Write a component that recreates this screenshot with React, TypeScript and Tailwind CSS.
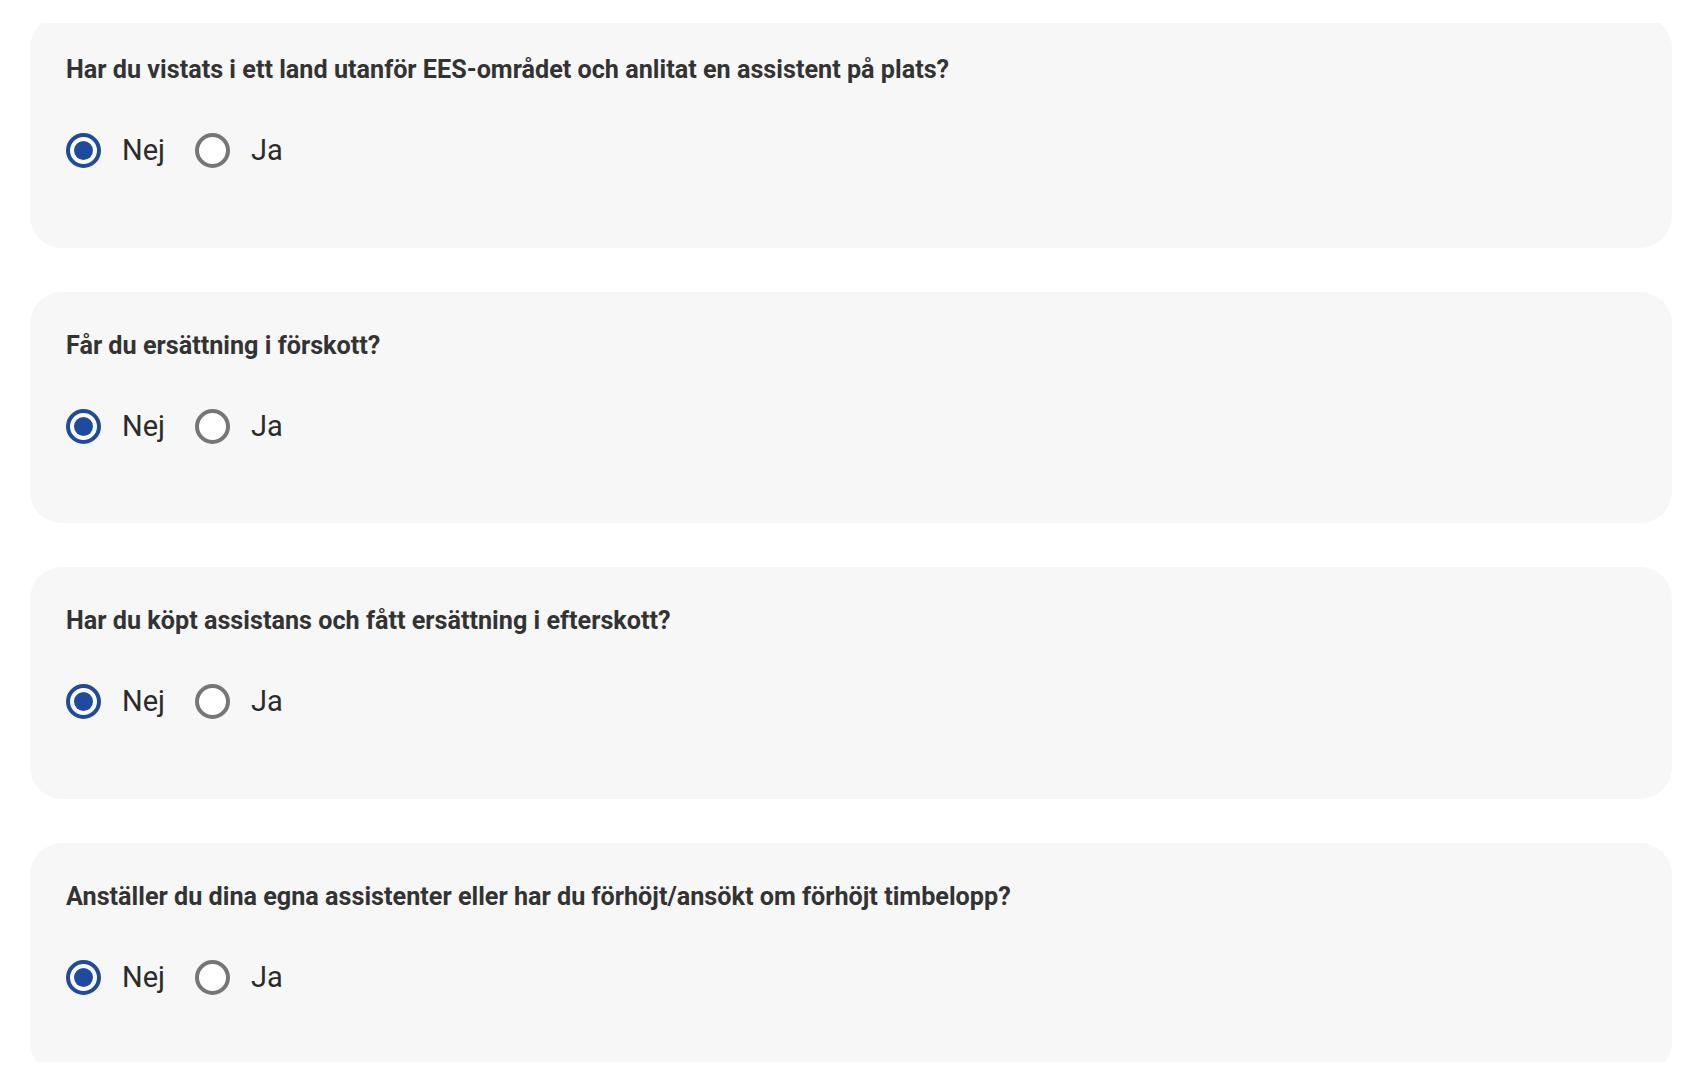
import { useState } from 'react'

const QUESTIONS = [
  { id: 'ees', label: 'Har du vistats i ett land utanför EES-området och anlitat en assistent på plats?' },
  { id: 'forskott', label: 'Får du ersättning i förskott?' },
  { id: 'efterskott', label: 'Har du köpt assistans och fått ersättning i efterskott?' },
  { id: 'timbelopp', label: 'Anställer du dina egna assistenter eller har du förhöjt/ansökt om förhöjt timbelopp?' },
]

const OPTIONS = [
  { value: 'nej', label: 'Nej' },
  { value: 'ja', label: 'Ja' },
]

function Radio({ checked }: { checked: boolean }) {
  return (
    <span
      className={`grid place-items-center w-[35px] h-[35px] rounded-full border-[4px] bg-white shrink-0 ${
        checked ? 'border-[#1f4b9f]' : 'border-[#767676]'
      }`}
    >
      {checked && <span className="w-[19px] h-[19px] rounded-full bg-[#1f4b9f]" />}
    </span>
  )
}

function QuestionCard({ id, label, value, onChange }: {
  id: string
  label: string
  value: string
  onChange: (v: string) => void
}) {
  return (
    <fieldset className="bg-[#f7f7f7] rounded-[32px] pl-9 pr-9 pt-[39px] pb-[79.5px]">
      <legend className="contents">
        <span className="block text-[25.2px] leading-[29px] font-bold text-[#333333]">{label}</span>
      </legend>
      <div className="flex items-center mt-[49px]">
        {OPTIONS.map(opt => (
          <label
            key={opt.value}
            className="flex items-center gap-[21px] mr-[30px] cursor-pointer"
          >
            <input
              type="radio"
              name={id}
              value={opt.value}
              checked={value === opt.value}
              onChange={() => onChange(opt.value)}
              className="sr-only"
            />
            <Radio checked={value === opt.value} />
            <span className="text-[29px] leading-[35px] text-[#2b2b2b]">{opt.label}</span>
          </label>
        ))}
      </div>
    </fieldset>
  )
}

export default function App() {
  const [answers, setAnswers] = useState<Record<string, string>>({
    ees: 'nej',
    forskott: 'nej',
    efterskott: 'nej',
    timbelopp: 'nej',
  })

  return (
    <div className="min-h-[1092px] bg-white font-['Roboto','Liberation_Sans',sans-serif] pt-[23px]">
      {/* Scroll area */}
      <div className="h-[1039px] overflow-hidden px-[30px]">
        <div className="flex flex-col gap-[44px] -mt-[7px]">
          {QUESTIONS.map(q => (
            <QuestionCard
              key={q.id}
              id={q.id}
              label={q.label}
              value={answers[q.id]}
              onChange={v => setAnswers(prev => ({ ...prev, [q.id]: v }))}
            />
          ))}
        </div>
      </div>
    </div>
  )
}
